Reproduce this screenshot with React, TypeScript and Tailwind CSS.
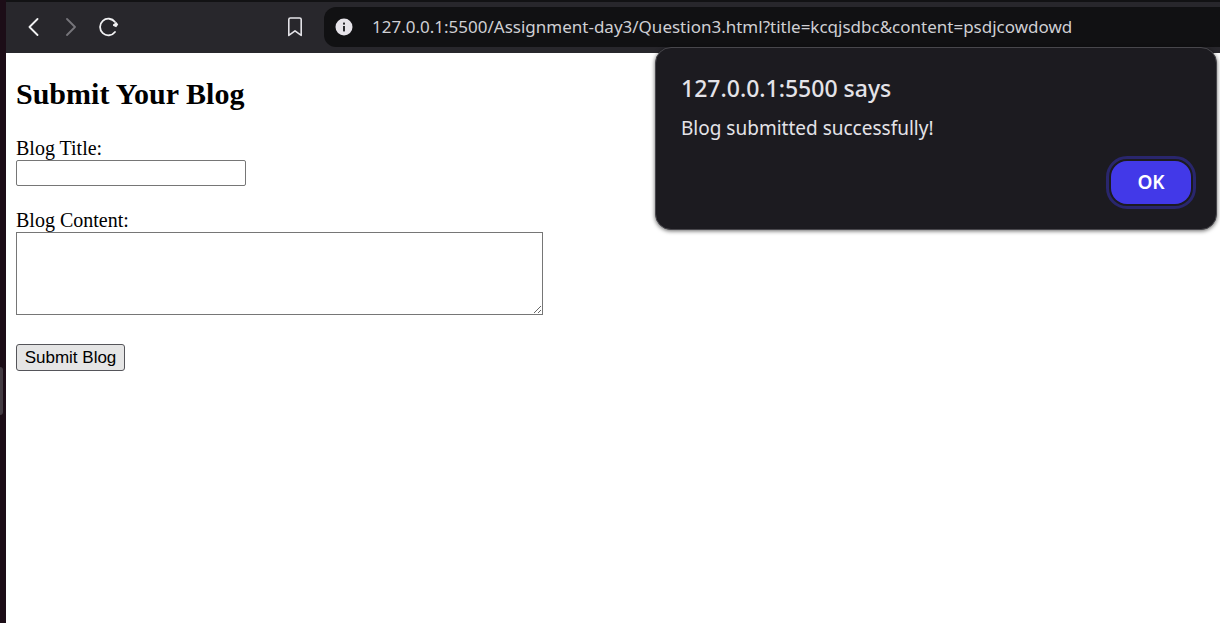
import React from "react";

function BackIcon() {
  return (
    <svg width="12" height="18" viewBox="0 0 12 18" fill="none" stroke="currentColor" strokeWidth="1.8" strokeLinecap="round" strokeLinejoin="round">
      <path d="M9.5 1 L1.5 9 L9.5 17" />
    </svg>
  );
}

function ForwardIcon() {
  return (
    <svg width="12" height="18" viewBox="0 0 12 18" fill="none" stroke="currentColor" strokeWidth="1.8" strokeLinecap="round" strokeLinejoin="round">
      <path d="M2 1 L10 9 L2 17" />
    </svg>
  );
}

function ReloadIcon() {
  return (
    <svg width="20" height="20" viewBox="0 0 20 20" fill="none">
      <path d="M16 5 A8.3 8.3 0 1 0 16 15" stroke="currentColor" strokeWidth="1.8" strokeLinecap="round" />
      <path d="M17.4 5 L19.2 7.4 L17.2 10.2 L14 8.8 L14 7.4 Z" fill="currentColor" />
    </svg>
  );
}

function BookmarkIcon() {
  return (
    <svg width="16" height="20" viewBox="0 0 16 20" fill="none" stroke="currentColor" strokeWidth="1.6" strokeLinejoin="round">
      <path d="M1.8 2.6 Q1.8 1 3.4 1 H12.6 Q14.2 1 14.2 2.6 V18.4 L8 13.8 L1.8 18.4 Z" />
    </svg>
  );
}

function InfoIcon() {
  return (
    <svg width="18" height="18" viewBox="0 0 18 18">
      <circle cx="9" cy="9" r="8.5" fill="#e6e3e9" />
      <rect x="8" y="4.6" width="2" height="2" fill="#2a2a2e" />
      <rect x="8" y="8" width="2" height="5.4" fill="#2a2a2e" />
    </svg>
  );
}

function Toolbar() {
  return (
    <header className="flex h-[53px] items-center border-t-2 border-[#121214] bg-[#28272c] pb-px text-[#f1f1f3]">
      <nav className="flex flex-1 items-center pl-[22px]">
        <button type="button" aria-label="Back"><BackIcon /></button>
        <button type="button" aria-label="Forward" className="ml-[25px] text-[#76757b]"><ForwardIcon /></button>
        <button type="button" aria-label="Reload" className="ml-[22px]"><ReloadIcon /></button>
        <button type="button" aria-label="Bookmark" className="ml-[168px] text-[#e4e3e8]"><BookmarkIcon /></button>
        <div className="ml-[21px] flex h-10 min-w-0 flex-1 items-center rounded-l-xl bg-[#111113] pl-[11px]">
          <button type="button" aria-label="Site information"><InfoIcon /></button>
          <input
            type="text"
            aria-label="Address"
            defaultValue="127.0.0.1:5500/Assignment-day3/Question3.html?title=kcqjsdbc&content=psdjcowdowd"
            className="ml-[19px] min-w-0 flex-1 bg-transparent font-['Noto_Sans',sans-serif] text-[17px] text-[#cfcfd3] outline-none"
          />
        </div>
      </nav>
    </header>
  );
}

function AlertDialog() {
  return (
    <div
      role="alertdialog"
      aria-labelledby="alert-title"
      aria-describedby="alert-message"
      className="absolute top-[47px] right-[3px] flex w-[562px] flex-col rounded-2xl border border-[#48474c] bg-[#1c1b20] px-[25px] pt-6 pb-[25px] font-['Noto_Sans',sans-serif] text-[#e4e3e8] shadow-[0_1px_4px_rgba(0,0,0,0.6)]"
    >
      <h1 id="alert-title" className="text-[23px] leading-8 font-medium">127.0.0.1:5500 says</h1>
      <p id="alert-message" className="mt-2.5 text-[19px] leading-7">Blog submitted successfully!</p>
      <button
        type="button"
        className="mt-[19px] h-[43px] w-20 self-end rounded-2xl bg-[#4239e8] text-[19px] font-semibold text-white outline-3 outline-offset-2 outline-[#29266d]"
      >
        OK
      </button>
    </div>
  );
}

export default function App() {
  return (
    <div className="relative flex min-h-screen bg-white">
      <aside className="flex w-1.5 shrink-0 flex-col bg-[#1c0d17] pt-[367px]">
        <div className="h-[48px] w-[3px] rounded-r-sm bg-[#433b42]" />
      </aside>
      <div className="min-w-0 flex-1">
        <Toolbar />
        <main className="px-2.5 pt-6 font-['Liberation_Serif',serif] text-xl text-black">
          <h2 className="text-[30px] leading-[34px] font-bold">Submit Your Blog</h2>
          <form className="mt-[26px] flex flex-col items-start" onSubmit={(e) => e.preventDefault()}>
            <label htmlFor="title" className="mb-px leading-[22px]">Blog Title:</label>
            <input id="title" type="text" className="h-[26px] w-[230px] rounded-xs border border-[#767676] px-0.5 text-base" />
            <label htmlFor="content" className="mt-[23px] mb-px leading-[22px]">Blog Content:</label>
            <textarea id="content" className="h-[83px] w-[527px] rounded-none border border-[#767676] p-0.5 font-['Liberation_Mono',monospace] text-base" />
            <button type="submit" className="mt-[29px] h-[27px] w-[109px] rounded-[3px] border border-[#55555a] bg-[#e5e5e5] font-['Liberation_Sans',sans-serif] text-[17px] leading-5">
              Submit Blog
            </button>
          </form>
        </main>
      </div>
      <AlertDialog />
    </div>
  );
}
